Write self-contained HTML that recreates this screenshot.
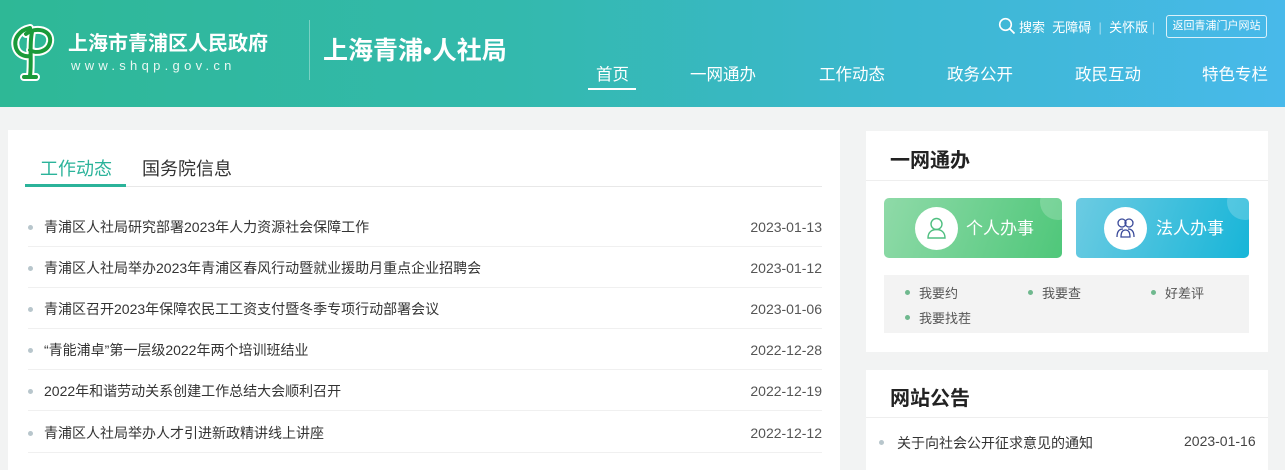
<!DOCTYPE html>
<html><head><meta charset="utf-8"><style>
*{margin:0;padding:0;box-sizing:border-box}
body{width:1285px;height:464px;overflow:hidden;background:#f2f3f3;font-family:"Liberation Sans","Noto Sans CJK SC",sans-serif;position:relative}
.hd{position:absolute;left:0;top:0;width:1285px;height:107px;background:linear-gradient(90deg,#2eb896 0%,#33b9ad 40%,#3cb8d0 70%,#48b9ea 100%)}
.a{position:absolute;white-space:nowrap}
.nav{color:#fff;font-size:16.5px;top:61px}
.panel{position:absolute;background:#fff}
.li{position:absolute;left:28px;width:794px;height:41px;border-bottom:1px solid #f0f0f0;font-size:14px;color:#333;line-height:42px}
.li:before{content:"";position:absolute;left:0;top:19px;width:5px;height:5px;border-radius:50%;background:#b8c6cc}
.li span{position:absolute;left:16px}
.li b{position:absolute;right:0;font-weight:normal;color:#555}
.g{position:absolute;font-size:13px;color:#555}
.g:before{content:"";position:absolute;left:-14px;top:7px;width:5px;height:5px;border-radius:50%;background:#6fb88e}
</style></head><body>
<div class="hd">
<svg class="a" style="left:8px;top:22px" width="50" height="60" viewBox="0 0 50 60"><path d="M22 6C12 8 5 16 8 26c2 6 8 9 14 8M18 12c10-8 26-4 24 8-2 10-14 12-20 8M24 10c-3 14 0 28-2 44M16 55h12" fill="none" stroke="#fff" stroke-width="8" stroke-linecap="round"/><path d="M22 6C12 8 5 16 8 26c2 6 8 9 14 8M18 12c10-8 26-4 24 8-2 10-14 12-20 8M24 10c-3 14 0 28-2 44M16 55h12" fill="none" stroke="#1a9a3a" stroke-width="4" stroke-linecap="round"/></svg>
<div class="a" style="left:68px;top:27px;color:#fff;font-size:20px;font-weight:bold">上海市青浦区人民政府</div>
<div class="a" style="left:71px;top:58px;color:#e8f7f2;font-size:13px;letter-spacing:4.3px">www.shqp.gov.cn</div>
<div class="a" style="left:309px;top:20px;width:1px;height:60px;background:rgba(255,255,255,.35)"></div>
<div class="a" style="left:323px;top:31px;color:#fff;font-size:25px;font-weight:bold">上海青浦•人社局</div>
<svg class="a" style="left:998px;top:17px" width="18" height="18" viewBox="0 0 18 18"><circle cx="7.5" cy="7.5" r="5.8" fill="none" stroke="#fff" stroke-width="1.6"/><path d="M12 12l4.5 4.5" stroke="#fff" stroke-width="1.8"/></svg>
<div class="a" style="left:1019px;top:17px;color:#fff;font-size:13px">搜索 &nbsp;无障碍 <span style="opacity:.5">&nbsp;|&nbsp;</span> 关怀版 <span style="opacity:.5">|</span></div>
<div class="a" style="left:1166px;top:15px;width:101px;height:23px;border:1px solid rgba(255,255,255,.8);border-radius:3px;color:#fff;font-size:11px;line-height:21px;text-align:center">返回青浦门户网站</div>
<div class="a nav" style="left:596px">首页</div>
<div class="a" style="left:588px;top:88px;width:48px;height:2px;background:#fff"></div>
<div class="a nav" style="left:690px">一网通办</div>
<div class="a nav" style="left:819px">工作动态</div>
<div class="a nav" style="left:947px">政务公开</div>
<div class="a nav" style="left:1075px">政民互动</div>
<div class="a nav" style="left:1202px">特色专栏</div>
</div>

<div class="panel" style="left:8px;top:130px;width:832px;height:340px">
<div class="a" style="left:32px;top:25px;font-size:18px;color:#2bb39a">工作动态</div>
<div class="a" style="left:134px;top:25px;font-size:18px;color:#333">国务院信息</div>
<div class="a" style="left:17px;top:56px;width:797px;height:1px;background:#e8e8e8"></div>
<div class="a" style="left:17px;top:54px;width:101px;height:3px;background:#2bb39a"></div>
</div>
<div class="li" style="top:206px"><span>青浦区人社局研究部署2023年人力资源社会保障工作</span><b>2023-01-13</b></div>
<div class="li" style="top:247px"><span>青浦区人社局举办2023年青浦区春风行动暨就业援助月重点企业招聘会</span><b>2023-01-12</b></div>
<div class="li" style="top:288px"><span>青浦区召开2023年保障农民工工资支付暨冬季专项行动部署会议</span><b>2023-01-06</b></div>
<div class="li" style="top:329px"><span>“青能浦卓”第一层级2022年两个培训班结业</span><b>2022-12-28</b></div>
<div class="li" style="top:370px"><span>2022年和谐劳动关系创建工作总结大会顺利召开</span><b>2022-12-19</b></div>
<div class="li" style="top:412px"><span>青浦区人社局举办人才引进新政精讲线上讲座</span><b>2022-12-12</b></div>

<div class="panel" style="left:866px;top:131px;width:402px;height:221px">
<div class="a" style="left:24px;top:13px;font-size:20px;font-weight:bold;color:#222">一网通办</div>
<div class="a" style="left:0;top:49px;width:402px;height:1px;background:#eee"></div>
<div class="a" style="left:18px;top:67px;width:178px;height:60px;border-radius:5px;background:linear-gradient(110deg,#8fdaa8,#4fc77a);overflow:hidden"><div class="a" style="right:-14px;top:-14px;width:36px;height:36px;border-radius:50%;background:rgba(255,255,255,.2)"></div>
<div class="a" style="left:31px;top:9px;width:43px;height:43px;border-radius:50%;background:#fff"><svg width="43" height="43" viewBox="0 0 43 43"><circle cx="21.5" cy="17" r="5.5" fill="none" stroke="#4fbf80" stroke-width="1.4"/><path d="M13 31c0-6 4-8.5 8.5-8.5S30 25 30 31z" fill="none" stroke="#4fbf80" stroke-width="1.4"/></svg></div>
<div class="a" style="left:82px;top:16px;color:#fff;font-size:17px">个人办事</div></div>
<div class="a" style="left:210px;top:67px;width:173px;height:60px;border-radius:5px;background:linear-gradient(110deg,#6ccbe2,#17b5d8);overflow:hidden"><div class="a" style="right:-14px;top:-14px;width:36px;height:36px;border-radius:50%;background:rgba(255,255,255,.2)"></div>
<div class="a" style="left:28px;top:9px;width:43px;height:43px;border-radius:50%;background:#fff"><svg width="43" height="43" viewBox="0 0 43 43" fill="none" stroke="#3a4a9a" stroke-width="1.3"><circle cx="18" cy="16" r="4"/><circle cx="25" cy="16" r="4"/><path d="M13 30c0-5 2-8 6-8M30 30c0-5-2-8-6-8M17 30c0-5 2-7 4.5-7s4.5 2 4.5 7z"/></svg></div>
<div class="a" style="left:80px;top:16px;color:#fff;font-size:17px">法人办事</div></div>
<div class="a" style="left:18px;top:144px;width:365px;height:58px;background:#f3f3f3">
<div class="g" style="left:35px;top:8px">我要约</div>
<div class="g" style="left:158px;top:8px">我要查</div>
<div class="g" style="left:281px;top:8px">好差评</div>
<div class="g" style="left:35px;top:33px">我要找茬</div>
</div>
</div>

<div class="panel" style="left:866px;top:370px;width:402px;height:100px">
<div class="a" style="left:24px;top:12px;font-size:20px;font-weight:bold;color:#222">网站公告</div>
<div class="a" style="left:0;top:47px;width:402px;height:1px;background:#eee"></div>
<div class="a" style="left:13px;top:70px;width:5px;height:5px;border-radius:50%;background:#b8c6cc"></div>
<div class="a" style="left:31px;top:63px;font-size:14px;color:#333">关于向社会公开征求意见的通知</div>
<div class="a" style="left:318px;top:63px;font-size:14px;color:#444">2023-01-16</div>
</div>
</body></html>
